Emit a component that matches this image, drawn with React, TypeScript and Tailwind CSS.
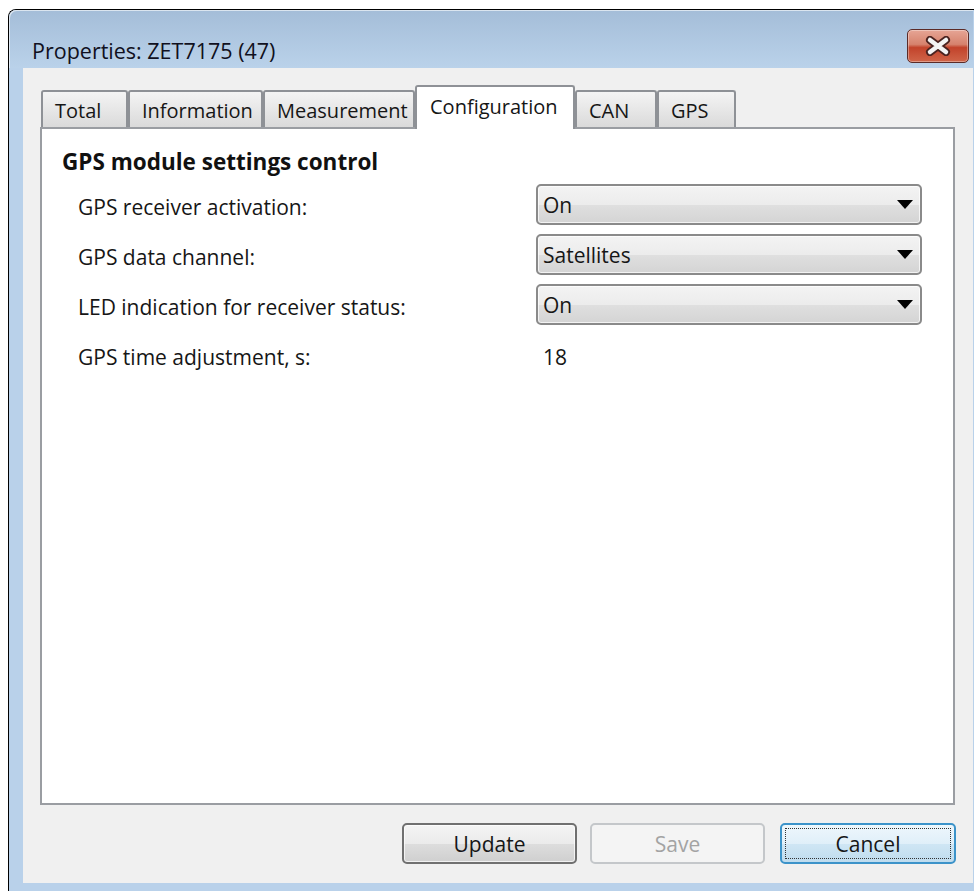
import { useState } from "react";

const tabs = [
  { label: "Total", w: "w-[87px]" },
  { label: "Information", w: "w-[135px]" },
  { label: "Measurement", w: "w-[152px]" },
  { label: "Configuration", w: "w-[160px]" },
  { label: "CAN", w: "w-[82px]" },
  { label: "GPS", w: "w-[79px]" },
];

function CloseButton() {
  return (
    <button className="mt-[19px] ml-auto mr-[4px] flex h-[34px] w-[62px] items-center justify-center rounded-[5px] border border-[#5b2b27] bg-[linear-gradient(to_bottom,#e6a595_0%,#d6826d_45%,#c2432b_55%,#d06549_100%)] shadow-[inset_0_0_0_1px_rgba(255,255,255,0.35)]">
      <svg width="30" height="20" viewBox="0 0 30 20">
        <path d="M7 4 L23 16 M23 4 L7 16" stroke="#4a2320" strokeWidth="8" strokeLinecap="round" />
        <path d="M7 4 L23 16 M23 4 L7 16" stroke="#f4f4f4" strokeWidth="4.5" strokeLinecap="round" />
      </svg>
    </button>
  );
}

function Combo({ value }: { value: string }) {
  return (
    <div className="flex h-[41px] w-[386px] items-center justify-between rounded-[5px] border-2 border-[#8a8a8a] bg-[linear-gradient(to_bottom,#f3f3f3_0%,#ececec_50%,#dfdfdf_52%,#d4d4d4_100%)] pl-[5px] pr-[7px] shadow-[inset_0_0_0_1px_rgba(255,255,255,0.7)]">
      <span className="text-[#161616]">{value}</span>
      <svg width="16" height="9" viewBox="0 0 16 9">
        <path d="M0 0 L16 0 L8 9 Z" fill="#000000" />
      </svg>
    </div>
  );
}

function Row({ label, children }: { label: string; children: React.ReactNode }) {
  return (
    <div className="flex h-[41px] items-center">
      <div className="w-[458px] pt-[4px] text-[#161616]">{label}</div>
      {children}
    </div>
  );
}

export default function App() {
  const [active] = useState("Configuration");

  return (
    <div className="h-[891px] w-[974px] overflow-hidden bg-white pl-[8px] pt-[9px] font-['Open_Sans',sans-serif] text-[21px] leading-[28px]">
      <div className="flex h-[900px] w-[990px] shrink-0 flex-col rounded-tl-[8px] border-l border-t border-black bg-[#b9d1ea]">
        {/* title bar */}
        <div className="flex h-[58px] w-[964px] rounded-tl-[7px] bg-linear-to-b from-[#a4bdd8] to-[#bad2ea] pl-[23px] shadow-[inset_1px_1px_0_rgba(255,255,255,0.6)]">
          <div className="pt-[27px] text-[21.5px] text-[#101020]">Properties: ZET7175 (47)</div>
          <CloseButton />
        </div>

        <div className="flex pl-[14px]">
          <div className="flex h-[815px] w-[950px] flex-col bg-[#f0f0f0] px-[17px] pt-[17px]">
            {/* tab strip */}
            <div className="flex h-[42px] items-end pl-[1px] text-[20px]">
              {tabs.map((t) =>
                t.label === active ? (
                  <div
                    key={t.label}
                    className={`${t.w} relative z-10 -mb-[2px] h-[44px] rounded-t-[3px] border-2 border-b-0 border-[#8e9196] bg-white pl-[13px] pt-[6px] text-[#161616]`}
                  >
                    {t.label}
                  </div>
                ) : (
                  <div
                    key={t.label}
                    className={`${t.w} h-[37px] rounded-t-[3px] border-2 border-b-0 border-[#8e9196] bg-linear-to-b from-[#f4f4f4] to-[#dadada] pl-[12px] pt-[5px] text-[#161616]`}
                  >
                    {t.label}
                  </div>
                )
              )}
            </div>

            {/* tab page */}
            <div className="h-[678px] w-[915px] border-2 border-[#9a9da2] bg-white">
              <div className="pl-[20px] pt-[19px] text-[22.5px] font-bold text-[#111]">GPS module settings control</div>
              <div className="mt-[8px] flex flex-col gap-[9px] pl-[36px]">
                <Row label="GPS receiver activation:">
                  <Combo value="On" />
                </Row>
                <Row label="GPS data channel:">
                  <Combo value="Satellites" />
                </Row>
                <Row label="LED indication for receiver status:">
                  <Combo value="On" />
                </Row>
                <Row label="GPS time adjustment, s:">
                  <div className="pl-[7px] pt-[4px] text-[#161616]">18</div>
                </Row>
              </div>
            </div>

            {/* dialog buttons */}
            <div className="mt-[18px] flex w-[916px] justify-end">
              <button className="h-[41px] w-[175px] rounded-[5px] border-2 border-[#707070] bg-[linear-gradient(to_bottom,#f4f4f4_0%,#ebebeb_50%,#dddddd_52%,#cfcfcf_100%)] text-[#161616] shadow-[inset_0_0_0_1px_rgba(255,255,255,0.7)]">
                Update
              </button>
              <button
                disabled
                className="ml-[13px] h-[41px] w-[175px] rounded-[5px] border-2 border-[#c4c7ca] bg-[#f4f4f4] text-[#a3a3a3]"
              >
                Save
              </button>
              <button className="ml-[15px] flex h-[41px] w-[176px] items-center justify-center rounded-[5px] border-2 border-[#3c93c9] bg-[linear-gradient(to_bottom,#eef7fc_0%,#e0eff9_50%,#cfe6f4_52%,#bfdcee_100%)] p-[3px]">
                <span className="flex h-full w-full items-center justify-center border border-dotted border-[#333] text-[#161616]">
                  Cancel
                </span>
              </button>
            </div>
          </div>
        </div>
      </div>
    </div>
  );
}
